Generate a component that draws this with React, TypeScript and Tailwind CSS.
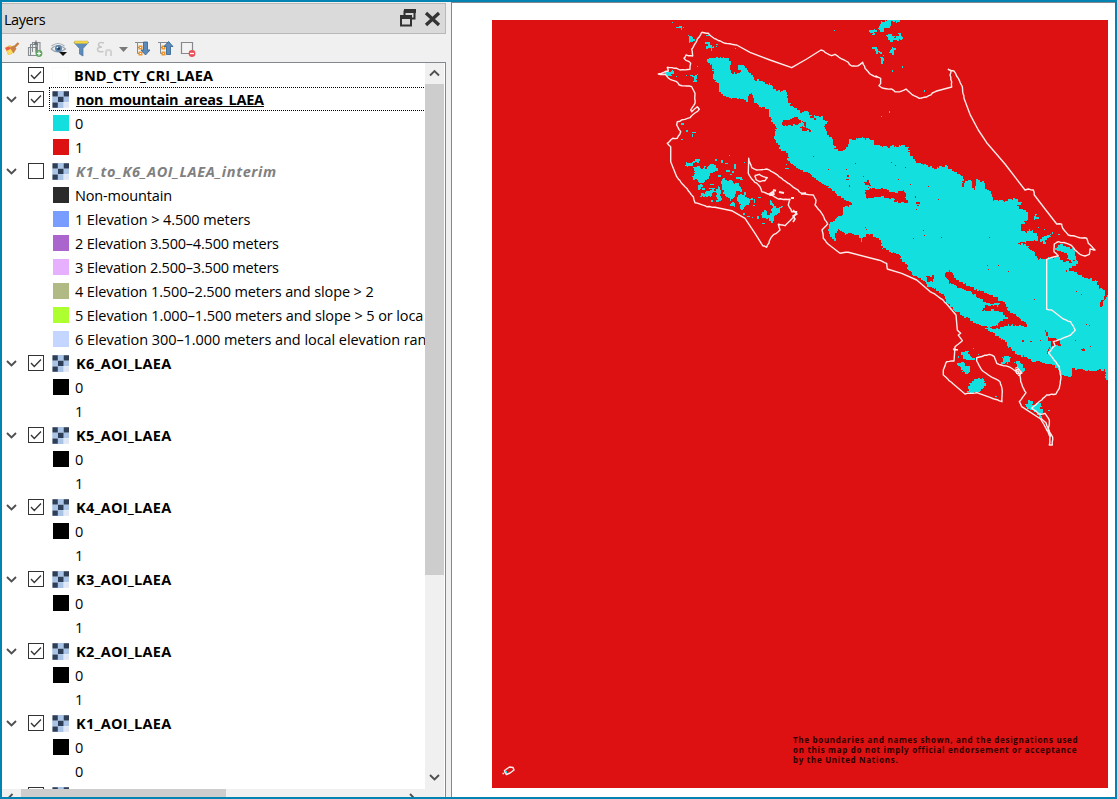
import React from "react";

type P = [number, number];
type Tile = "A" | "B" | "C" | "D";
const origin: Record<Tile, P> = { A: [640, 15], B: [870, 15], C: [800, 200], D: [670, 145] };

// Survey tiles hold their points at three units per pixel.
function pts(tile: Tile, s: string): P[] {
  const [ox, oy] = origin[tile];
  return s.trim().split(/\s+/).map((q) => {
    const [x, y] = q.split(",").map(Number);
    return [ox + x / 3, oy + y / 3] as P;
  });
}

function seeded(seed: number) {
  let a = seed;
  return () => {
    a = (a * 1664525 + 1013904223) % 4294967296;
    return a / 4294967296;
  };
}

// Stepped outline on the raster's cells, with a slightly ragged edge.
function cells(points: P[], amp = 1.2, seed = 7): string {
  const rnd = seeded(seed);
  let d = "";
  for (let i = 0; i < points.length; i++) {
    const [x0, y0] = points[i];
    const [x1, y1] = points[(i + 1) % points.length];
    const len = Math.hypot(x1 - x0, y1 - y0);
    const straight = (x0 >= 1107.9 && x1 >= 1107.9) || (y0 <= 20 && y1 <= 20);
    const n = straight ? 1 : Math.max(1, Math.round(len / 1.6));
    for (let k = 0; k < n; k++) {
      const t = k / n;
      const j = straight ? 0 : amp;
      const x = Math.round(x0 + (x1 - x0) * t + (rnd() - 0.5) * 2 * j);
      const y = Math.round(y0 + (y1 - y0) * t + (rnd() - 0.5) * 2 * j);
      d += d ? `H${x}V${y}` : `M${x} ${y}`;
    }
  }
  return d + "Z";
}

function line(points: P[], amp = 0.4): string {
  const rnd = seeded(23);
  let d = "";
  points.forEach(([x0, y0], i) => {
    if (i === points.length - 1) {
      d += `L${x0.toFixed(1)} ${y0.toFixed(1)}`;
      return;
    }
    const [x1, y1] = points[i + 1];
    const len = Math.hypot(x1 - x0, y1 - y0);
    const n = len > 14 ? 1 : Math.max(1, Math.round(len / 2.5));
    for (let k = 0; k < n; k++) {
      const t = k / n;
      const j = k ? amp : 0;
      const x = x0 + (x1 - x0) * t + (rnd() - 0.5) * 2 * j;
      const y = y0 + (y1 - y0) * t + (rnd() - 0.5) * 2 * j;
      d += `${d ? "L" : "M"}${x.toFixed(1)} ${y.toFixed(1)}`;
    }
  });
  return d;
}

const mainland: P[] = [
  ...pts("A", "202,129 220,126 268,127 271,146 271,172 302,175 306,165 296,160 294,146 308,152 322,164 326,176 340,184 342,196 360,194 385,208 402,226 438,227 443,260 458,275 480,290 505,288 514,308 525,318 526,300 545,305 553,318 566,320 552,335 565,360 578,375 588,405 600,411 622,397 630,374 668,368 700,377"),
  ...pts("B", "18,391 50,396 100,390 115,400 118,418 140,445 165,448 190,460 223,452 250,470 272,483 280,492 272,522 285,500 300,496 308,510 312,525 318,510 318,496 335,498 350,506 345,520 365,530 368,560 380,553 400,558 430,552 450,560 455,568 435,572 462,585 478,605 470,620 455,630 452,650 475,650 500,660 505,675 475,680 445,686 480,695"),
  ...pts("C", "682,145 702,158 712,180 738,175 770,172 790,184 815,186 838,178 828,200 798,215 830,215 850,232 880,240 905,250 924,252 924,538 916,530 918,510 880,514 845,510 820,506 815,535 790,525 770,500 735,488 700,484 680,470 655,465 630,445 620,425 600,410 575,395 550,380 520,365 495,350 470,335 450,315 435,300 430,285 405,265 385,260 370,240 345,225 325,212 325,195 310,185 300,165 270,153 250,145 240,120 225,110 205,100 195,78 200,100 192,108 170,90 158,100 140,92 120,85 110,100 105,122 92,112 85,95 90,70 105,60 115,45 130,50 128,25 158,12 140,0"),
  ...pts("A", "610,550 600,545 580,525 560,510 540,500 515,478 490,465 460,450 445,430 440,408 418,400 415,385 404,370 402,355 410,345 400,320 388,305 388,280 355,278 350,262 342,255 342,236 325,236 322,262 310,250 275,248 250,240 240,228 240,210 228,200 220,180 218,150 202,142"),
];

const holes: P[][] = [
  pts("A", "427,314 448,314 455,308 472,308 480,318 480,330 430,331"),
  pts("A", "486,316 497,322 497,338 515,348 488,346 482,336 494,336"),
  pts("B", "-12,525 0,520 40,522 75,535 105,525 110,560 82,562 70,550 40,545 0,550 -12,548"),
  pts("B", "-20,500 -4,497 2,512 -12,508"),
  pts("C", "432,217 452,212 465,235 490,250 515,262 545,275 590,293 600,308 575,312 555,305 535,290 510,275 480,262 450,250 440,235"),
  pts("C", "540,330 556,318 590,318 600,304 620,312 622,335 645,340 668,362 680,380 640,374 618,374 600,388 545,380 590,378 600,364 620,352 605,335 580,330"),
  pts("C", "378,230 398,228 402,244 385,245"),
  pts("C", "733,392 742,402 748,415 770,415 785,435 760,440 742,460 755,430 738,404"),
  pts("C", "892,238 924,244 924,285 910,270 896,262"),
  pts("C", "924,292 914,300 906,325 898,318 910,288 924,278"),
  pts("C", "843,447 856,445 854,452 845,454"),
  pts("C", "120,90 142,88 145,98 128,104 116,100"),
];

const nicoya: P[][] = [
  pts("D", "50,66 48,54 64,52 68,46 88,42 90,50 72,56 62,66"),
  pts("D", "66,94 74,84 70,66 84,64 94,74 104,62 108,72 116,60 138,58 142,78 128,86 122,84 116,100 106,112 90,116 80,104 70,104"),
  pts("D", "84,120 96,116 98,128 84,136"),
  pts("D", "90,156 96,146 118,136 134,130 134,142 120,156 104,154"),
  pts("D", "138,132 144,122 150,130 152,150 154,168 142,170 140,154"),
  pts("D", "152,108 160,100 172,110 184,102 192,116 206,116 208,126 216,124 214,138 196,142 196,154 184,166 176,156 166,154 160,138 152,122"),
  pts("D", "202,156 212,148 222,152 222,138 232,140 228,154 240,160 242,178 226,182 224,194 212,190 212,176 204,170"),
  pts("D", "178,176 190,174 196,184 180,184"),
  pts("D", "272,206 282,200 288,190 288,204 294,212 304,204 308,190 304,176 300,164 308,178 318,190 338,180 336,190 328,198 326,210 310,212 312,232 302,232 300,222 288,220 276,216"),
];

const patches: P[][] = [
  pts("A", "198,82 212,88 215,98 232,88 228,98 212,106 202,95"),
  pts("A", "108,42 118,33 128,35 130,43 120,40"),
  pts("A", "140,60 155,68 162,78 153,85 148,72"),
  pts("A", "70,174 84,172 100,168 98,180 90,184"),
  pts("A", "150,181 172,182 172,196 160,198 158,188"),
  pts("A", "563,515 580,508 608,525 590,532"),
  pts("A", "566,625 590,618 595,600 602,620 640,630 644,650 620,660 600,640 582,650 580,672 568,650"),
  pts("A", "633,650 655,643 672,638 682,650 670,676 650,660"),
  pts("A", "690,50 706,42 704,60"),
  pts("A", "693,98 708,96 718,110"),
  pts("B", "26,44 34,20 50,14 94,14 86,22 68,22 58,36 46,44 38,52"),
  pts("B", "50,62 68,60 80,68 84,53 92,52 98,70 82,76 62,82"),
  pts("B", "52,114 68,95 80,104 70,116"),
  pts("B", "16,102 34,112 22,116"),
  pts("B", "34,120 37,147 42,120"),
  pts("B", "468,650 475,645 505,660 500,678 478,672"),
  pts("B", "495,600 500,594 504,612 493,612"),
  pts("B", "508,680 523,660 552,654 537,670 525,684"),
  pts("C", "765,140 782,135 800,140 822,150 832,182 810,184 795,158 770,150"),
  pts("C", "474,464 500,453 520,478 500,482 490,466 480,472"),
  pts("C", "468,488 490,486 508,504 507,522 485,512"),
  pts("C", "508,550 516,540 530,534 547,538 558,556 547,574 525,579 502,574"),
  pts("C", "605,474 618,466 630,475 627,489 608,490"),
  pts("C", "643,488 657,488 676,516 658,512"),
  pts("C", "676,612 686,598 698,613 717,608 732,642 722,654 705,637 688,627"),
];

// x, y, width, height of single-cell specks, in pixels
const landSpecks = [
  [672, 22], [676, 27], [681, 29], [834, 30], [706, 35, 3, 1], [735, 48], [697, 66], [668, 75, 4, 1], [676, 76], [686, 75], [681, 123, 3, 2],
  [686, 130, 2, 2], [692, 132, 4, 1], [692, 134, 1, 3], [681, 139, 2, 1], [729, 155], [715, 159, 2, 2], [734, 164, 2, 5], [744, 162],
  [726, 170, 4, 2], [702, 188, 3, 2], [747, 216, 3, 1], [757, 216, 2, 3], [762, 223, 3, 1], [718, 175, 3, 2], [723, 181, 2, 1],
  [721, 160, 2, 3], [725, 163, 3, 1], [732, 171, 2, 2], [736, 177, 6, 2], [740, 179, 3, 1], [730, 174, 2, 1], [710, 184, 4, 1], [751, 198, 2, 2],
  [753, 205, 2, 1], [758, 197, 3, 1], [743, 213, 2, 2], [752, 217, 1, 1], [754, 199, 1, 4], [711, 200, 2, 2], [694, 172, 3, 1], [709, 188, 6, 1],
  [785, 168, 4, 1], [786, 164], [872, 30, 5, 2], [902, 66, 1, 2], [892, 70, 1, 2], [924, 90, 1, 2], [889, 111, 1, 2], [881, 116],
  [1038, 227], [1044, 229], [1058, 234, 2, 1], [1028, 233], [973, 348], [978, 354], [976, 382, 2, 2], [995, 396, 2, 1], [1048, 410, 2, 1],
];
const seaSpecks = [
  [813, 156], [828, 169], [846, 169], [855, 163], [846, 179, 3, 1], [847, 175, 2, 2], [863, 176], [868, 187], [891, 162], [895, 165],
  [905, 167], [898, 179], [910, 184], [928, 186], [916, 202, 4, 2], [915, 196, 1, 2], [938, 199], [916, 209], [924, 235], [941, 237],
  [989, 237], [913, 238], [923, 230], [917, 205, 2, 1], [987, 265], [988, 269], [998, 265], [1008, 271], [1034, 299], [1076, 291],
  [1081, 294], [1022, 340, 2, 2], [1030, 341, 2, 1], [1040, 340], [1086, 324], [1089, 325], [1090, 346], [1075, 340], [849, 185, 1, 2],
];

const coast: P[] = [
  ...pts("A", "185,52 205,55 222,70 255,85 290,90 330,112 390,135 455,158 500,132 543,105 575,122 585,118 605,132 618,138 635,153 655,152 668,142 675,160 695,180 712,187"),
  ...pts("B", "18,183 32,190 32,205 27,212 40,220 65,222 75,230 90,230 108,222 125,238 148,250 170,246 200,228 245,216 245,200 240,180 243,168 235,163 252,168 265,190 277,215 282,250 300,298 325,345 350,383 405,447 465,525 475,522 490,525 493,540 520,575 560,627 575,628 578,640 595,660 630,668 650,670 655,685 675,705"),
  ...pts("C", "882,150 870,147 868,163 855,168 840,163 825,150 815,137 800,130 775,125 763,132 762,155 775,168 740,178 740,328 755,330 790,357 812,365 826,390 812,405 775,420 760,425 765,437 745,458 762,480 778,500 783,530 778,565 768,582 740,585 725,600 695,625 720,643 735,640 748,660 745,690 758,712 757,735 748,735 750,710 738,685 722,657 665,620 658,605 678,578 662,545 658,520 648,508 650,520 665,520 655,508 645,512 625,500 610,497 590,490 583,470 568,463 530,473 530,483 545,510 570,528 600,545 607,575 606,605 570,592 530,578 495,582 460,552 430,525 430,510 440,485 462,483 465,440 487,422 475,405 482,400 472,390 468,345 440,312 415,290 385,270 350,240 305,220 262,207 260,190 235,180 145,157 120,160 85,133 70,115 66,90 83,72 65,40 45,15 48,0"),
  ...pts("A", "520,540 485,535 455,512 430,495 405,475 380,462 350,465 335,458 326,430 325,475 335,492 360,515 365,530 395,540 415,552 450,553 445,570 455,590 470,590 462,605 455,612 435,632 415,628 420,645 395,665 380,697 368,692 345,655 315,610 275,587 225,577 200,575 165,563 160,545 135,515 110,485 92,440 92,395 82,385 98,370 112,370 122,350 110,330 112,320 150,308 178,283 172,275 155,290 152,285 165,265 165,235 155,215 118,210 110,200 90,193 75,178 55,177 85,168 82,157 110,160 120,165 150,163 152,145 132,130 138,120 158,123 155,103 170,78 185,52"),
];

function MapCanvas() {
  return (
    <svg className="block h-[768px] w-[616px] bg-[#dd1111]" viewBox="492 20 616 768" aria-hidden="true">
      <g shapeRendering="crispEdges">
        <path d={cells(mainland, 1.1)} fill="#14dfdf" />
        {holes.map((h, i) => <path key={i} d={cells(h, 1, i + 3)} fill="#dd1111" />)}
        {nicoya.map((h, i) => <path key={i} d={cells(h, 0.9, i + 31)} fill="#14dfdf" />)}
        {patches.map((h, i) => <path key={i} d={cells(h, 1.3, i + 11)} fill="#14dfdf" />)}
        {landSpecks.map(([x, y, w = 1, h = 1], i) => <rect key={i} x={x} y={y} width={w} height={h} fill="#14dfdf" />)}
        {seaSpecks.map(([x, y, w = 1, h = 1], i) => <rect key={i} x={x} y={y} width={w} height={h} fill="#dd1111" />)}
      </g>
      <g fill="none" stroke="#ffecec" strokeWidth="1.4" strokeLinejoin="round">
        <path d={line(coast)} />
        <path d={line(pts("A", "344,482 358,478 370,485 382,488 375,497 360,500 348,494 344,482"))} />
        <path d={line(pts("A", "388,537 400,530 401,538 388,540"))} strokeWidth="2" />
        <path d="M773 190l3 .8M779 192l5 1M791 198l3 0M801 194l5-1" strokeWidth="2" />
        <path d="M793 210l4 4-4 2 2 3-2 3M953 349l5 1M956 349l-2 2" strokeWidth="1.6" />
        <path d={line(pts("C", "645,505 652,502 667,518 657,528 645,512"))} strokeWidth="1" />
        <path d={line(pts("C", "722,655 738,668 748,692 752,710"))} />
        <path d="M504.500 770.500l5-3.500 3.500.5 1 2.500-4 3-3.500 1.500-1.500-2z" strokeWidth="1.500" />
        <path d="M502.500 773.500h1.500" strokeWidth="1.500" />
      </g>
      <rect x="506" y="771" width="1" height="2" fill="#14dfdf" />
    </svg>
  );
}

function Chevron({ dir = "down", className = "" }: { dir?: "down" | "up" | "left" | "right"; className?: string }) {
  const d = { down: "M1 3l4.500 4.500L10 3", up: "M1 7.500L5.500 3 10 7.500", left: "M7.500 1L3 5.500 7.500 10", right: "M3 1l4.500 4.500L3 10" }[dir];
  return (
    <svg className={`block h-[11px] w-[11px] shrink-0 ${className}`} viewBox="0 0 11 11" fill="none" stroke="#505050" strokeWidth="1.9" aria-hidden="true">
      <path d={d} />
    </svg>
  );
}

function Check({ on }: { on: boolean }) {
  return (
    <span className="block h-4 w-4 shrink-0 border border-[#333333] bg-white">
      {on && (
        <svg className="block" width="14" height="14" viewBox="0 0 14 14" fill="none" stroke="#333" strokeWidth="1.3" aria-hidden="true">
          <path d="M2 7l3.300 3.500L12 3.500" />
        </svg>
      )}
    </span>
  );
}

function RasterIcon() {
  return (
    <svg className="block shrink-0" width="17" height="17" viewBox="0 0 17 17" aria-hidden="true">
      <path fill="#c3d5ec" d="M.3.300h16.700v10.700h-5.500v6H.3z" />
      <path fill="#a9c4e6" d="M6 0h5.500v5.500H6zM.5 5.800H6V11H.5zM11.500 5.800H17V11h-5.500zM6 11.300h5.500V17H6z" />
      <path fill="#2e3e56" d="M.5.300h5.300v5.200H.5zM11.700.300H17v5.200h-5.300zM6 5.700h5.500V11H6zM.5 11.500h5.300v5.200H.5z" />
      <path fill="#dfe8f4" d="M11.700 11.200H17v5.600h-5.300z" />
    </svg>
  );
}

interface Item { kind: "layer" | "leaf"; text: string; color?: string; state?: "on" | "off" | "active"; vector?: boolean; track?: string }
const group = (n: number, second = "1"): Item[] => [
  { kind: "layer", text: `K${n}_AOI_LAEA`, state: "on", track: "tracking-[0.27px]" },
  { kind: "leaf", text: "0", color: "bg-black" },
  { kind: "leaf", text: second, color: "bg-white" },
];
const items: Item[] = [
  { kind: "layer", text: "BND_CTY_CRI_LAEA", state: "on", vector: true, track: "tracking-[0.15px]" },
  { kind: "layer", text: "non_mountain_areas_LAEA", state: "active", track: "tracking-[-0.24px]" },
  { kind: "leaf", text: "0", color: "bg-[#14dfdf]" },
  { kind: "leaf", text: "1", color: "bg-[#dd1111]" },
  { kind: "layer", text: "K1_to_K6_AOI_LAEA_interim", state: "off", track: "tracking-[0.6px]" },
  { kind: "leaf", text: "Non-mountain", color: "bg-[#2b2b2b]" },
  { kind: "leaf", text: "1 Elevation > 4.500 meters", color: "bg-[#789dff]", track: "tracking-[-0.1px]" },
  { kind: "leaf", text: "2 Elevation 3.500–4.500 meters", color: "bg-[#aa66cd]", track: "tracking-[-0.21px]" },
  { kind: "leaf", text: "3 Elevation 2.500–3.500 meters", color: "bg-[#e6b0ff]", track: "tracking-[-0.21px]" },
  { kind: "leaf", text: "4 Elevation 1.500–2.500 meters and slope > 2", color: "bg-[#b1ba84]", track: "tracking-[-0.12px]" },
  { kind: "leaf", text: "5 Elevation 1.000–1.500 meters and slope > 5 or loca", color: "bg-[#adff2f]", track: "tracking-[-0.1px]" },
  { kind: "leaf", text: "6 Elevation 300–1.000 meters and local elevation ran", color: "bg-[#c4d6ff]", track: "tracking-[-0.06px]" },
  ...group(6), ...group(5), ...group(4), ...group(3), ...group(2), ...group(1, "0"),
];

function Row({ item }: { item: Item }) {
  if (item.kind === "leaf") {
    return (
      <div className="flex h-6 shrink-0 items-center pl-[51px]">
        <span className={`block h-4 w-4 shrink-0 ${item.color}`} />
        <span className={`ml-[6px] pt-[2px] whitespace-nowrap text-[14.5px] leading-6 ${item.track ?? "tracking-[-0.17px]"}`}>{item.text}</span>
      </div>
    );
  }
  const active = item.state === "active";
  const off = item.state === "off";
  return (
    <div className="flex h-6 shrink-0 items-center pl-1">
      <span className="w-[22px]">{!item.vector && <Chevron />}</span>
      <Check on={!off} />
      <div className={`ml-[5px] flex h-6 flex-1 items-center pl-[2px] ${active ? "mr-[1px] border-y border-l border-dotted border-black" : "border-l border-transparent"}`}>
        {item.vector ? <span className="block h-[17px] w-[17px] shrink-0 border border-[#fafafa]" /> : <RasterIcon />}
        <span
          className={`pt-[2px] whitespace-nowrap text-[14.5px] leading-6 font-bold ${item.vector ? "ml-[5px]" : "ml-[7px]"} ${item.track ?? ""} ${active ? "underline decoration-1 underline-offset-1 [text-decoration-skip-ink:none]" : ""} ${off ? "text-[#808080] italic" : ""}`}
        >
          {item.text}
        </span>
      </div>
    </div>
  );
}

function Toolbar() {
  return (
    <div className="flex h-7 items-center pt-[1px] pl-[2px]">
      <svg width="198" height="20" viewBox="4 39 198 20" aria-hidden="true">
        <path d="M5 47.500l5-2.500 5 4-3 5-4 1z" fill="#efc04a" /><path d="M5 48l4-1.500 2 2.500-4 2z" fill="#ee5a4c" /><path d="M6.500 51l4-2 3 3-4.500 3z" fill="#f9dc5c" />
        <path d="M10 47.500l3.500-2 3 3-3 5z" fill="#c98046" /><path d="M14.500 47l4-4" stroke="#c67b39" strokeWidth="2.300" />
        <g fill="none" stroke="#858d91" strokeWidth="1.100"><path d="M28.500 47.500h8v8h-8zM30.500 55V44.500h7V52M32.500 52V42.500h7.500V51" /></g>
        <path d="M36 40.500v12M34 44.500l2-2 2 2" stroke="#6b7276" strokeWidth="1.200" fill="none" /><circle cx="39" cy="53.500" r="3.400" fill="#62a766" /><path d="M37 53.500h4M39 51.500v4" stroke="#fff" strokeWidth="1.200" />
        <path d="M51 49q7-7 14.500 0-7.500 6-14.500 0" fill="#e8edf1" stroke="#9aa3aa" strokeWidth="1.100" /><path d="M51.500 46q6.500-5 13 0" fill="none" stroke="#a5acb2" strokeWidth="1.200" /><circle cx="58.500" cy="48.500" r="3.500" fill="#5b83ac" /><circle cx="58.500" cy="48.500" r="1.600" fill="#263e57" /><circle cx="57.500" cy="47.500" r=".8" fill="#fff" /><path d="M59 52h8l-4 4z" fill="#111" />
        <path d="M74 42.500h14.500l-5.500 6v7.500l-3.500-2v-5.500z" fill="#5d8cba" stroke="#4a7198" strokeWidth=".7" /><path d="M74.500 41h13.500v2.500H74.500z" fill="#f4d83f" stroke="#c2b155" strokeWidth=".5" />
        <path d="M104 43q-5.500-1.500-5.500 1.500 0 2.500 3.500 2.500-4.500 0-4.500 2.500 0 3 6 2" fill="none" stroke="#c6c6c6" strokeWidth="1.500" /><path d="M106 56v-4q0-2 2.500-2t2.500 2v4" fill="none" stroke="#d2d2d2" strokeWidth="2" />
        <path d="M119 47h9l-4.500 5z" fill="#77797b" />
        <g><path d="M135 42.500h12M137.500 42v11.500h3M137.500 47.500h3" fill="none" stroke="#858c91" /><path d="M138.500 45.500h4v4h-4zM138.500 51.500h4v4h-4z" fill="#f0962a" /><path d="M140 47h1v1h-1zM140 53h1v1h-1z" fill="#fff" /><path d="M143.500 42h4v8h2.500l-4.500 5-4.500-5h2.500z" fill="#5b8bbb" stroke="#315f8d" strokeWidth=".8" /></g>
        <g><path d="M158 42.500h12M160.500 42v11.500h3M160.500 47.500h3" fill="none" stroke="#858c91" /><path d="M161.500 45.500h4v4h-4zM161.500 51.500h4v4h-4z" fill="#f0962a" /><path d="M163 47h1v1h-1zM163 53h1v1h-1z" fill="#fff" /><path d="M166.500 54.500v-8H164l4.500-5 4.500 5h-2.500v8z" fill="#5b8bbb" stroke="#315f8d" strokeWidth=".8" /></g>
        <path d="M181.500 42.500h11v11h-11z" fill="#f3f3f3" stroke="#85898d" strokeWidth="1.200" /><circle cx="192" cy="53.500" r="3.400" fill="#ea4f58" /><path d="M190 53.500h4" stroke="#fff" strokeWidth="1.300" />
      </svg>
    </div>
  );
}

export default function App() {
  return (
    <div className="flex h-[799px] w-[1117px] overflow-hidden border-2 border-[#0383b1] bg-[#f0f0f0] font-['Open_Sans','Noto_Sans',sans-serif] text-black">
      <section className="flex w-[444px] shrink-0 flex-col pt-[1px]">
        <header className="flex h-[31px] shrink-0 items-center justify-between border border-l-0 border-[#b8b8b8] bg-[#dadada] pr-[4px] pl-[2px]">
          <h1 className="pt-[2px] text-[14.5px] tracking-[-0.45px]">Layers</h1>
          <svg width="42" height="20" viewBox="398 9 42 20" aria-hidden="true">
            <path d="M403.500 11.500h10v7h-10z" fill="#dadada" stroke="#333" strokeWidth="2" /><path d="M403 9h12v4h-12z" fill="#333" />
            <path d="M400 16.500h10v9h-10z" fill="#dadada" stroke="#333" strokeWidth="2" /><path d="M399 15h12v4h-12z" fill="#333" />
            <path d="M425 13l13 12M438 13l-13 12" stroke="#333" strokeWidth="3.300" />
          </svg>
        </header>
        <Toolbar />
        <div className="flex min-h-0 flex-1 flex-col border-t border-r border-[#828790] bg-white">
          <div className="flex min-h-0 flex-1">
            <div className="flex min-w-0 flex-1 flex-col overflow-hidden">
              {items.map((item, i) => <Row key={i} item={item} />)}
              <Row item={{ kind: "layer", text: "", state: "on" }} />
            </div>
            <div className="mr-[1px] flex w-[19px] shrink-0 flex-col items-center bg-[#f0f0f0]">
              <div className="flex h-[21px] items-center"><Chevron dir="up" /></div>
              <div className="h-[491px] w-full bg-[#cdcdcd]" />
              <div className="mt-auto flex h-6 items-center"><Chevron /></div>
            </div>
          </div>
          <div className="mr-[1px] flex h-2 shrink-0 items-start overflow-hidden bg-[#f0f0f0]">
            <div className="w-[19px] pt-[4px] pl-[3px]"><Chevron dir="left" /></div>
            <div className="h-2 w-[205px] bg-[#cdcdcd]" />
            <div className="mr-[26px] ml-auto pt-[4px]"><Chevron dir="right" /></div>
          </div>
        </div>
      </section>
      <main className="relative ml-[5px] min-w-0 flex-1 border-t border-l border-[#828790] bg-white pt-[17px] pl-10">
        <MapCanvas />
        <p className="absolute top-[732px] left-[341px] text-[8px] leading-[10px] font-bold tracking-[0.7px] whitespace-nowrap text-[#2a0000]">
          The boundaries and names shown, and the designations used<br />
          on this map do not imply official endorsement or acceptance<br />
          by the United Nations.
        </p>
      </main>
    </div>
  );
}
